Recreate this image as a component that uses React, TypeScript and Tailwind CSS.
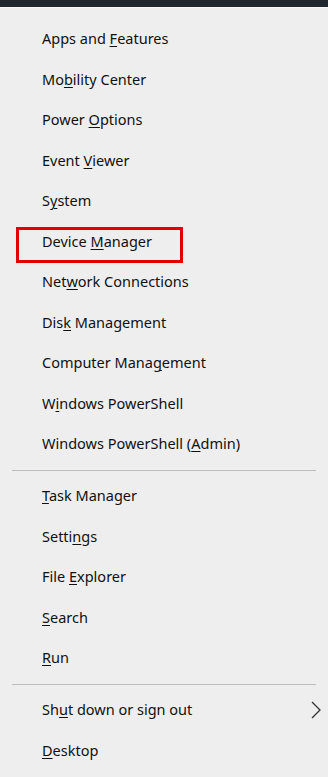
import React from "react";

type Item = { label: string; key: number; boxed?: boolean; arrow?: boolean };

const groups: Item[][] = [
  [
    { label: "Apps and Features", key: 9 },
    { label: "Mobility Center", key: 2 },
    { label: "Power Options", key: 6 },
    { label: "Event Viewer", key: 6 },
    { label: "System", key: 1 },
    { label: "Device Manager", key: 7, boxed: true },
    { label: "Network Connections", key: 3 },
    { label: "Disk Management", key: 3 },
    { label: "Computer Management", key: 13 },
    { label: "Windows PowerShell", key: 1 },
    { label: "Windows PowerShell (Admin)", key: 20 },
  ],
  [
    { label: "Task Manager", key: 0 },
    { label: "Settings", key: 5 },
    { label: "File Explorer", key: 5 },
    { label: "Search", key: 0 },
    { label: "Run", key: 0 },
  ],
  [
    { label: "Shut down or sign out", key: 2, arrow: true },
    { label: "Desktop", key: 0 },
  ],
];

function Label({ item }: { item: Item }) {
  const { label, key } = item;
  return (
    <span>
      {label.slice(0, key)}
      <span className="underline underline-offset-[2px] decoration-1">{label[key]}</span>
      {label.slice(key + 1)}
    </span>
  );
}

function Row({ item }: { item: Item }) {
  return (
    <div className="relative flex h-[40.5px] items-center pl-[42px] pr-[6px]">
      {item.boxed && (
        <div className="absolute left-[16px] top-[5px] h-[36px] w-[167px] border-[3px] border-[#e10000]" />
      )}
      <Label item={item} />
      {item.arrow && (
        <svg className="ml-auto" width="12" height="20" viewBox="0 0 12 20" fill="none">
          <path d="M2 2 L10 10 L2 18" stroke="#333" strokeWidth="1.3" />
        </svg>
      )}
    </div>
  );
}

export default function App() {
  return (
    <div
      className="h-[777px] w-[328px] overflow-hidden bg-[#eeeeee] text-[14.5px] text-[#111]"
      style={{ fontFamily: '"Noto Sans", "Open Sans", sans-serif' }}
    >
      <div className="h-[7px] bg-[#1f262e]" />
      <div className="h-px bg-[#f8f8f8]" />
      <div className="pt-[11px]">
        {groups.map((g, i) => (
          <div key={i}>
            {i > 0 && <div className="mx-[12px] my-[5px] h-[1.5px] bg-[#bdbdbd]" />}
            {g.map((item) => (
              <Row key={item.label} item={item} />
            ))}
          </div>
        ))}
      </div>
    </div>
  );
}
